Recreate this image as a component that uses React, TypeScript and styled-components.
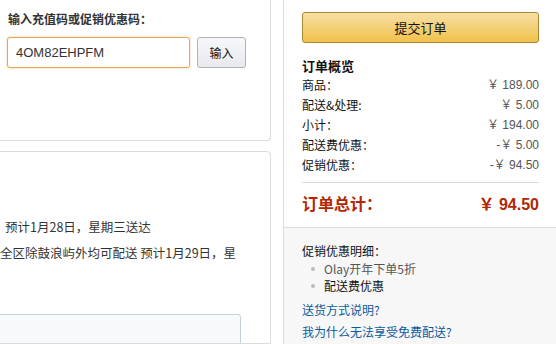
import React from "react";
import styled, { createGlobalStyle } from "styled-components";

const GlobalStyle = createGlobalStyle`
  html, body {
    margin: 0;
    padding: 0;
    background: #fff;
    font-family: Arial, "Liberation Sans", "Noto Sans CJK SC", sans-serif;
    font-size: 12px;
    color: #333;
    overflow: hidden;
  }
`;

const Page = styled.div`
  display: flex;
  width: 556px;
  height: 344px;
  overflow: hidden;
`;

const LeftCol = styled.div`
  width: 271px;
  display: flex;
  flex-direction: column;
  gap: 10px;
  flex-shrink: 0;
`;

const Card = styled.div<{ open?: boolean }>`
  margin-left: -12px;
  background: #fff;
  border: 1px solid #dcdcdc;
  border-top: ${(p) => (p.open ? "none" : "1px solid #dcdcdc")};
  border-radius: ${(p) => (p.open ? "0 0 4px 0" : "0 4px 0 0")};
`;

const CodeCard = styled(Card)`
  height: 141px;
  flex-shrink: 0;
  padding: 12px 0 0 18px;
  box-sizing: border-box;
`;

const CodeLabel = styled.div`
  font-weight: bold;
  font-size: 12px;
  color: #333;
  line-height: 16px;
  padding-left: 1px;
`;

const CodeRow = styled.div`
  display: flex;
  gap: 7px;
  margin-top: 9px;
`;

const CodeInput = styled.input`
  width: 183px;
  height: 31px;
  box-sizing: border-box;
  border: 1px solid #e4a853;
  border-radius: 3px;
  box-shadow: 0 0 3px rgba(228, 168, 83, 0.5);
  padding: 0 8px;
  font-family: Arial, "Liberation Sans", sans-serif;
  font-size: 13px;
  color: #333;
  outline: none;
`;

const GrayButton = styled.button`
  width: 49px;
  height: 31px;
  border: 1px solid #adb1b8;
  border-radius: 3px;
  background: linear-gradient(#f7f8fa, #e7e9ec);
  font-family: "Noto Sans CJK SC", sans-serif;
  font-size: 12px;
  color: #111;
  padding: 0;
`;

const ShipCard = styled(Card)`
  flex: 1;
  min-height: 0;
  padding: 62px 0 0 12px;
  overflow: hidden;
`;

const ShipLine = styled.div<{ shift?: number }>`
  margin-left: ${(p) => p.shift ?? 0}px;
  font-family: "Noto Sans CJK SC", sans-serif;
  font-size: 12.5px;
  line-height: 26px;
  color: #333;
  white-space: nowrap;
`;

const InnerBox = styled.div`
  margin: 48px 29px 0 -20px;
  height: 40px;
  border: 1px solid #c4d2d8;
  border-radius: 3px;
  background: #f7fafb;
`;

const RightCol = styled.div`
  flex: 1;
  margin-left: 12px;
  border-left: 1px solid #dcdcdc;
  display: flex;
  flex-direction: column;
`;

const Summary = styled.div`
  padding: 12px 17px 0 18px;
  height: 228px;
  flex-shrink: 0;
  box-sizing: border-box;
  border-bottom: 1px solid #dcdcdc;
`;

const SubmitButton = styled.button`
  width: 100%;
  height: 31px;
  border: 1px solid #a88734;
  border-radius: 3px;
  background: linear-gradient(#f7dfa5, #f0c14b);
  font-family: "Noto Sans CJK SC", sans-serif;
  font-size: 13px;
  color: #111;
  padding: 0;
`;

const Heading = styled.div`
  margin-top: 14px;
  font-family: "Noto Sans CJK SC", sans-serif;
  font-weight: bold;
  font-size: 13px;
  color: #111;
  line-height: 18px;
`;

const Row = styled.div`
  display: flex;
  justify-content: space-between;
  line-height: 20px;
  font-family: "Noto Sans CJK SC", sans-serif;
  font-size: 12px;
  color: #111;
`;

const Amount = styled.span`
  font-family: Arial, "Liberation Sans", "Noto Sans CJK SC", sans-serif;
  color: #555;
`;

const Divider = styled.div`
  border-top: 1px solid #dcdcdc;
  margin-top: 7px;
`;

const TotalRow = styled.div`
  display: flex;
  justify-content: space-between;
  align-items: center;
  height: 40px;
  font-family: "Noto Sans CJK SC", sans-serif;
  font-weight: bold;
  font-size: 16px;
  color: #b12704;
`;

const TotalAmount = styled.span`
  font-family: Arial, "Liberation Sans", "Noto Sans CJK SC", sans-serif;
  font-size: 16px;
`;

const Promo = styled.div`
  flex: 1;
  background: #f7f7f7;
  padding: 14px 17px 0 18px;
  font-family: "Noto Sans CJK SC", sans-serif;
  font-size: 12px;
  color: #111;
`;

const PromoTitle = styled.div`
  line-height: 18px;
`;

const PromoList = styled.ul`
  margin: 0;
  padding: 0 0 0 22px;
  list-style: none;
`;

const PromoItem = styled.li<{ muted?: boolean }>`
  position: relative;
  line-height: 17px;
  color: ${(p) => (p.muted ? "#555" : "#111")};
  &::before {
    content: "";
    position: absolute;
    left: -13px;
    top: 7px;
    width: 4px;
    height: 4px;
    border-radius: 50%;
    background: #bbb;
  }
`;

const HelpLink = styled.a`
  display: block;
  color: #0a5aa0;
  text-decoration: none;
  line-height: 22px;
  &:first-of-type {
    margin-top: 5px;
  }
`;

export default function App() {
  return (
    <>
      <GlobalStyle />
      <Page>
        <LeftCol>
          <CodeCard open>
            <CodeLabel>输入充值码或促销优惠码：</CodeLabel>
            <CodeRow>
              <CodeInput defaultValue="4OM82EHPFM" />
              <GrayButton>输入</GrayButton>
            </CodeRow>
          </CodeCard>
          <ShipCard>
            <ShipLine shift={4}>预计1月28日，星期三送达</ShipLine>
            <ShipLine shift={-1}>全区除鼓浪屿外均可配送 预计1月29日，星</ShipLine>
            <InnerBox />
          </ShipCard>
        </LeftCol>
        <RightCol>
          <Summary>
            <SubmitButton>提交订单</SubmitButton>
            <Heading>订单概览</Heading>
            <Row>
              <span>商品：</span>
              <Amount>￥ 189.00</Amount>
            </Row>
            <Row>
              <span>配送&amp;处理:</span>
              <Amount>￥ 5.00</Amount>
            </Row>
            <Row>
              <span>小计：</span>
              <Amount>￥ 194.00</Amount>
            </Row>
            <Row>
              <span>配送费优惠：</span>
              <Amount>-￥ 5.00</Amount>
            </Row>
            <Row>
              <span>促销优惠：</span>
              <Amount>-￥ 94.50</Amount>
            </Row>
            <Divider />
            <TotalRow>
              <span>订单总计：</span>
              <TotalAmount>￥ 94.50</TotalAmount>
            </TotalRow>
          </Summary>
          <Promo>
            <PromoTitle>促销优惠明细：</PromoTitle>
            <PromoList>
              <PromoItem muted>Olay开年下单5折</PromoItem>
              <PromoItem>配送费优惠</PromoItem>
            </PromoList>
            <HelpLink href="#">送货方式说明?</HelpLink>
            <HelpLink href="#">我为什么无法享受免费配送?</HelpLink>
          </Promo>
        </RightCol>
      </Page>
    </>
  );
}
